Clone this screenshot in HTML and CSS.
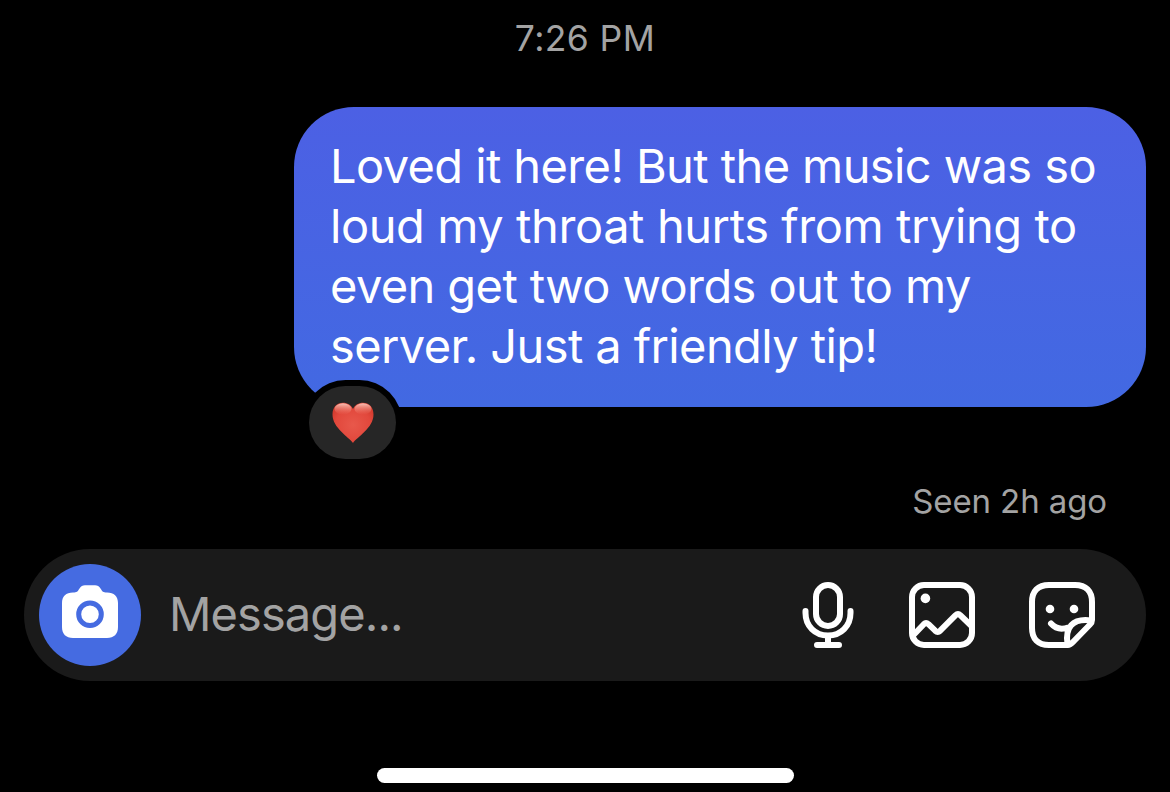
FILE: index.html
```html
<!DOCTYPE html>
<html lang="en">
<head>
    <meta charset="UTF-8">
    <title>Messages</title>
    <link rel="stylesheet" href="styles.css">
</head>
<body>
    <main class="chat">
        <div class="timestamp">7:26 PM</div>

        <!-- Sent message -->
        <div class="message">
            <p class="message-text">
                <span class="line">Loved it here! But the music was so</span>
                <span class="line line-loose">loud my throat hurts from trying to</span>
                <span class="line">even get two words out to my</span>
                <span class="line">server. Just a friendly tip!</span>
            </p>
            <div class="reaction">
                <svg width="42" height="42" viewBox="0 0 42 42">
                    <defs>
                        <radialGradient id="heart" cx="0.5" cy="0.55" r="0.6">
                            <stop offset="0" stop-color="#e8584b"/>
                            <stop offset="0.7" stop-color="#e2483c"/>
                            <stop offset="1" stop-color="#d23a2d"/>
                        </radialGradient>
                        <linearGradient id="shine" x1="0" y1="0" x2="0" y2="1">
                            <stop offset="0" stop-color="#ffd3c8" stop-opacity="0.9"/>
                            <stop offset="1" stop-color="#f0806f" stop-opacity="0"/>
                        </linearGradient>
                    </defs>
                    <path fill="url(#heart)" d="M21 41 C17 35 .5 26 .5 12.5 C.5 5 5 .8 11 .8 C15.5 .8 19 3 21 7 C23 3 26.500 .8 31 .8 C37 .8 41.500 5 41.500 12.500 C41.500 26 25 35 21 41Z"/>
                    <ellipse cx="11" cy="7" rx="8.500" ry="5.800" fill="url(#shine)"/>
                    <ellipse cx="31" cy="7" rx="8.500" ry="5.800" fill="url(#shine)"/>
                </svg>
            </div>
        </div>

        <div class="seen">Seen 2h ago</div>

        <!-- Message input bar -->
        <div class="composer">
            <div class="camera">
                <svg width="56" height="54" viewBox="0 0 56 54">
                    <path fill="#fff" d="M11 7.5 C15 7.5 15.5 6.8 17.5 3.5 C19 1 20.5 .3 23 .3 H33 C35.5 .3 37 1 38.5 3.5 C40.5 6.8 41 7.5 45 7.5 C52 7.5 56 11.5 56 18 V42 C56 49 52 53 45 53 H11 C4 53 0 49 0 42 V18 C0 11.5 4 7.5 11 7.5Z"/>
                    <circle cx="28" cy="29.3" r="11.3" fill="none" stroke="#456be1" stroke-width="5"/>
                </svg>
            </div>
            <span class="placeholder">Message...</span>
            <div class="actions">
                <svg class="icon" width="54" height="66" viewBox="0 0 54 66">
                    <rect x="15" y="3" width="24" height="41" rx="12"/>
                    <path d="M4.5 29 V31 C4.5 44 14 53.5 27 53.5 S49.5 44 49.5 31 V29 M27 54 V62 M16 63 H38"/>
                </svg>
                <svg class="icon" width="66" height="66" viewBox="0 0 66 66">
                    <rect x="3" y="3" width="60" height="60" rx="12"/>
                    <circle class="dot" cx="16.4" cy="16.4" r="4.8"/>
                    <path d="M4.5 53 L14.8 42.2 Q17 40 19.5 42.2 L26.2 48.7 Q28.7 51 31.2 48.7 L46.4 33.3 Q49 30.8 51.5 33.3 L62 43.5"/>
                </svg>
                <svg class="icon" width="66" height="66" viewBox="0 0 66 66">
                    <path d="M39 63 H20 C9 63 3 57 3 46 V20 C3 9 9 3 20 3 H46 C57 3 63 9 63 20 V38 C63 40 62.5 41 61 42.5 L44 60 C42 62 41 63 39 63Z"/>
                    <path d="M22 41.5 C26 46 32 48 39 45.5 M38.5 62 C36 46 43 36 62 38.5"/>
                    <circle class="dot" cx="21" cy="27" r="4.3"/>
                    <circle class="dot" cx="45" cy="27" r="4.3"/>
                </svg>
            </div>
        </div>

        <div class="home-indicator"></div>
    </main>
</body>
</html>
```
FILE: styles.css
```css
:root {
    --muted: #a3a3a3;
    --surface: #1a1a1a;
    --accent: #456be1;
}

* {
    box-sizing: border-box;
}

body {
    margin: 0;
    background-color: #000;
    color: #fff;
    font-family: Inter, "Liberation Sans", sans-serif;
}

.chat {
    display: flex;
    flex-direction: column;
    height: 792px;
    padding: 16px 24px 9px;
    overflow: hidden;
}

.timestamp {
    height: 46px;
    line-height: 46px;
    font-size: 35.5px;
    letter-spacing: 0.4px;
    text-align: center;
    color: var(--muted);
}

.message {
    position: relative;
    align-self: flex-end;
    width: 852px;
    height: 300px;
    margin-top: 45px;
    padding: 29px 36px;
    border-radius: 60px;
    background: linear-gradient(#4c60e4, #4269e2);
}

.message-text {
    margin: 0;
    font-size: 47px;
    line-height: 60px;
    letter-spacing: -0.6px;
    white-space: nowrap;
}

.line {
    display: block;
}

.line-loose {
    letter-spacing: -0.42px;
}

.reaction {
    position: absolute;
    left: 15px;
    bottom: -52px;
    display: flex;
    align-items: center;
    justify-content: center;
    width: 87px;
    height: 73px;
    border-radius: 37px;
    background-color: #262626;
    box-shadow: 0 0 0 6px #000;
}

.seen {
    height: 42px;
    margin: 73px 39px 0 0;
    line-height: 42px;
    font-size: 33px;
    letter-spacing: -0.1px;
    text-align: right;
    color: var(--muted);
}

.composer {
    display: flex;
    align-items: center;
    height: 132px;
    margin-top: 27px;
    padding: 0 51px 0 15px;
    border-radius: 66px;
    background-color: var(--surface);
}

.camera {
    display: flex;
    justify-content: center;
    width: 102px;
    height: 102px;
    padding-top: 21px;
    border-radius: 50%;
    background-color: var(--accent);
}

.placeholder {
    margin-left: 28px;
    padding-bottom: 4px;
    font-size: 47px;
    letter-spacing: -0.9px;
    color: var(--muted);
}

.actions {
    display: flex;
    gap: 54px;
    margin-left: auto;
}

.icon {
    fill: none;
    stroke: #fff;
    stroke-width: 6;
    stroke-linecap: round;
    stroke-linejoin: round;
}

.dot {
    fill: #fff;
    stroke: none;
}

.home-indicator {
    width: 417px;
    height: 15px;
    margin: auto auto 0 353px;
    border-radius: 8px;
    background-color: #fff;
}
```
